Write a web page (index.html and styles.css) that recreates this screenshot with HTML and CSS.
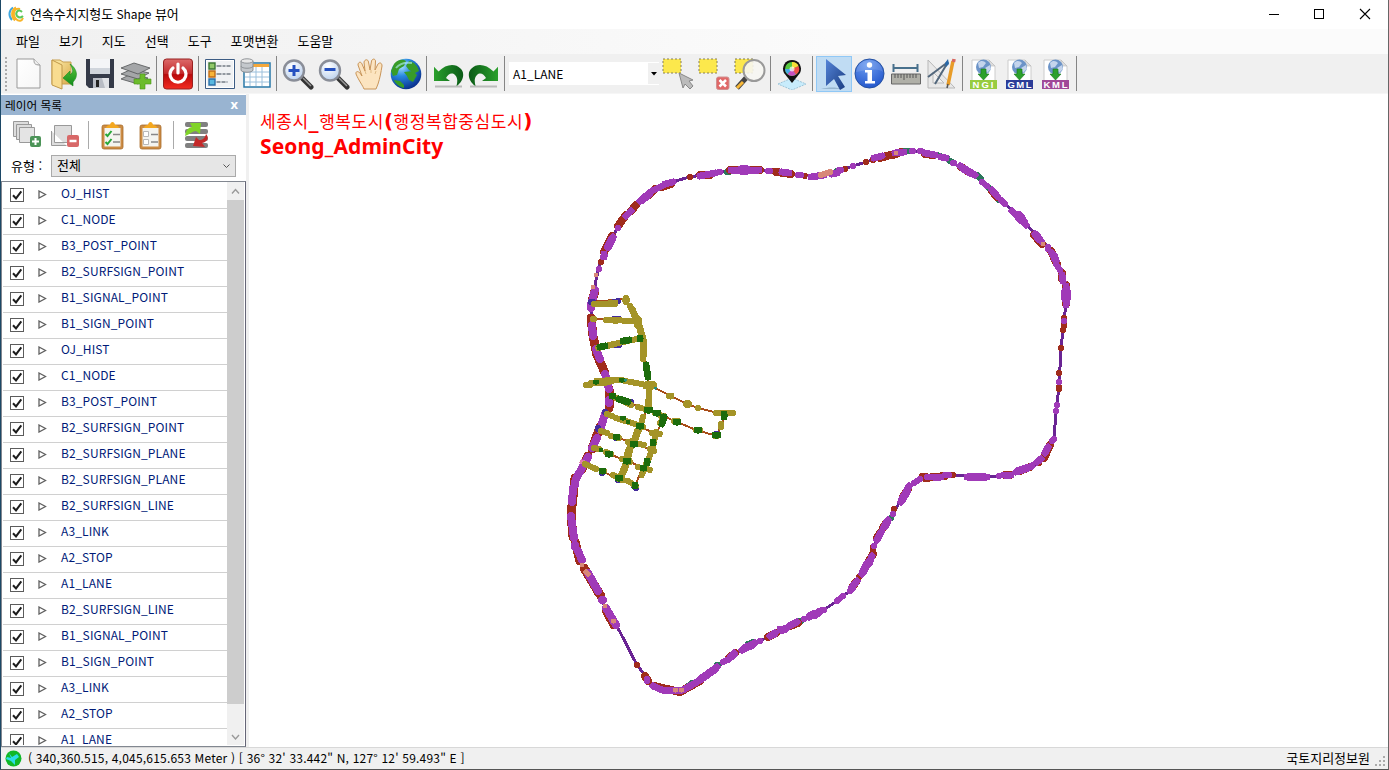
FILE: index.html
```html
<!DOCTYPE html>
<html lang="ko">
<head>
<meta charset="utf-8">
<title>연속수치지형도 Shape 뷰어</title>
<link rel="stylesheet" href="styles.css">
</head>
<body>
<svg class="defs" aria-hidden="true">
  <defs>
    <linearGradient id="gRed" x1="0" y1="0" x2="0" y2="1"><stop offset="0" stop-color="#dc6a6a"/><stop offset=".48" stop-color="#c42a2c"/><stop offset=".52" stop-color="#b80a0c"/><stop offset="1" stop-color="#f42c22"/></linearGradient>
    <linearGradient id="gFolder" x1="0" y1="0" x2="1" y2="1"><stop offset="0" stop-color="#fff0b0"/><stop offset="1" stop-color="#d8a848"/></linearGradient>
    <linearGradient id="gGreen" x1="0" y1="0" x2="0" y2="1"><stop offset="0" stop-color="#5cc83c"/><stop offset="1" stop-color="#118a1a"/></linearGradient>
    <linearGradient id="gPaper" x1="0" y1="0" x2="1" y2="1"><stop offset="0" stop-color="#fff"/><stop offset="1" stop-color="#f6f6f6"/></linearGradient>
    <radialGradient id="gLens" cx=".4" cy=".3" r=".8"><stop offset="0" stop-color="#fff"/><stop offset="1" stop-color="#b4ccec"/></radialGradient>
    <radialGradient id="gGlobe" cx=".35" cy=".25" r=".8"><stop offset="0" stop-color="#a8e4ff"/><stop offset=".4" stop-color="#2888e0"/><stop offset="1" stop-color="#082c88"/></radialGradient>
    <radialGradient id="gInfo" cx=".4" cy=".2" r=".9"><stop offset="0" stop-color="#6c9cf0"/><stop offset="1" stop-color="#1c50c8"/></radialGradient>
    <linearGradient id="gArrow" x1="0" y1="0" x2="1" y2="1"><stop offset="0" stop-color="#5484d8"/><stop offset="1" stop-color="#1a3c80"/></linearGradient>
    <linearGradient id="gUndo" x1="0" y1="0" x2="1" y2="0"><stop offset="0" stop-color="#2aa02c"/><stop offset="1" stop-color="#0a5a16"/></linearGradient>
    <g id="lens">
      <path d="M20 20l9 9" stroke="#333" stroke-width="5" stroke-linecap="round"/><path d="M21 20l8 8" stroke="#999" stroke-width="1.5"/>
      <circle cx="12" cy="12.500" r="10" fill="url(#gLens)" stroke="#8a8e98" stroke-width="2.400"/>
    </g>
    <g id="undo">
      <path d="M3 28.500h27" stroke="#bbb" stroke-width="2"/>
      <path d="M2 8.700V23H18L14 20C16 16 20 14 23 17C26 20 25.500 24 24.500 28C32 23 33 14 28.500 10.500C23 5 14 6 6.500 13.500z" fill="url(#gUndo)"/>
    </g>
    <g id="export">
      <path d="M3 2h17l6 6v16H3z" fill="#fff" stroke="#ccc"/><path d="M20 2v6h6z" fill="#ddd" stroke="#bbb" stroke-width=".6"/>
      <circle cx="14.500" cy="9" r="7.500" fill="#6c94c8"/><path d="M9 5c3-3 6-2 8 0l-3 4-4 1zM16 10l5-3 1 4-4 4z" fill="#c4d4ec"/>
      <path d="M12 11h5v5h3l-5.500 6L9 16h3z" fill="#2ca02c" stroke="#187818" stroke-width=".6"/>
    </g>
    <g id="check"><rect x=".5" y=".5" width="13" height="13" fill="#fff" stroke="#5c5c5c"/><path d="M3 7.200l3 3.200 5.300-7" fill="none" stroke="#1c1c1c" stroke-width="2"/></g>
    <path id="tri" d="M1 1l6.500 3.500L1 8z" fill="#fff" stroke="#606060" stroke-width="1.300"/>
    <g id="clip">
      <rect x="4" y="4" width="21" height="24" rx="2" fill="#cc8c44" stroke="#a86c2c" stroke-width=".8"/><path d="M6.500 7h16v18.500h-16z" fill="#f4f4f0"/>
      <path d="M8 7c0-2 2-3 4-3 .5-4 4.500-4 5 0 2 0 4 1 4 3z" fill="#f4a820"/><path d="M15 13.500h7M15 21h7" stroke="#888" stroke-width="1.500"/>
    </g>
  </defs>
</svg>

<div class="window">
  <header class="titlebar">
    <svg class="logo" width="17" height="17" viewBox="0 0 17 17" fill="none"><path d="M5 1.500C1 4 0 10 4 14" stroke="#40a8e0" stroke-width="2"/><path d="M8 1.500C3 4 3 11 7 14.500M12 3C6 1 4 9 8 13c3 3 6 2 7-1" stroke="#f8b428" stroke-width="2"/><path d="M14 6c-4-4-7 1-5 4 2 2 4 2 6 0" stroke="#5cc858" stroke-width="2"/></svg>
    <h1 class="title">연속수치지형도 <span>Shape</span> 뷰어</h1>
    <div class="controls">
      <svg width="46" height="29" viewBox="0 0 46 29"><path d="M19 14.500h10" stroke="#000"/></svg>
      <svg width="46" height="29" viewBox="0 0 46 29"><rect x="18.500" y="9.500" width="9" height="9" fill="none" stroke="#000"/></svg>
      <svg width="46" height="29" viewBox="0 0 46 29"><path d="M18 9l10 10M28 9L18 19" stroke="#000" stroke-width="1.100"/></svg>
    </div>
  </header>

  <nav class="menubar"><span>파일</span><span>보기</span><span>지도</span><span>선택</span><span>도구</span><span>포맷변환</span><span>도움말</span></nav>

  <div class="toolbar">
    <i class="grip"></i>
    <div class="tool"><svg viewBox="0 0 32 32"><path d="M5 1h17l6 6v23H5z" fill="url(#gPaper)" stroke="#999"/><path d="M22 1c0 4 0 6 6 6" fill="#eee" stroke="#999"/></svg></div>
    <div class="tool"><svg viewBox="0 0 32 32"><path d="M4 2h8l3 2h8v22H4z" fill="url(#gFolder)" stroke="#c8a050"/><path d="M4 2l10 5v24L4 27z" fill="#f8dc90" stroke="#c09848"/><path d="M22 6c5 3 10 11 3 18v4l-10-8 7-7v4c4-3 3-6 0-11z" fill="url(#gGreen)" stroke="#18881c" stroke-width=".6"/></svg></div>
    <div class="tool"><svg viewBox="0 0 32 32"><path d="M2 1h28v29H5l-3-3z" fill="#343a48"/><path d="M6 1h20v15H6z" fill="#f4f5f7"/><path d="M6 10h20v6H6z" fill="#d0d5dc"/><path d="M9 20h16v10H9z" fill="#b8bcc4"/><path d="M12 22h3v7h-3z" fill="#222"/><path d="M18 20l3 10h4V20z" fill="#e0e2e6"/></svg></div>
    <div class="tool"><svg viewBox="0 0 32 32"><g fill="#a4a6a8" stroke="#525456" stroke-width=".8"><path d="M1 21l10-5 17 4-10 6z"/><path d="M1 16l11-5 17 4-11 6z"/><path d="M1 10l13-5 16 5-12 6z"/></g><path d="M20 16h5v5h6v5h-6v5h-5v-5h-6v-5h6z" fill="#6cbc2c" stroke="#4c9418" stroke-width=".6"/></svg></div>
    <i class="sep"></i>
    <div class="tool"><svg viewBox="0 0 32 32"><rect x="1.500" y="1" width="29" height="30" rx="3" fill="url(#gRed)" stroke="#982020"/><path d="M11 10a8 8 0 1 0 10 0M16 6v9" fill="none" stroke="#fff" stroke-width="3.200" stroke-linecap="round"/></svg></div>
    <i class="sep"></i>
    <div class="tool"><svg viewBox="0 0 32 32"><path d="M1.500 1.500h29v29h-29z" fill="#fff" stroke="#3c5c84"/><path d="M3 3h26v26H3z" fill="#f0f2f4"/><g stroke-width="1.400"><path d="M5 5h6v6H5z" fill="#90c868" stroke="#3c7834"/><path d="M5 13h6v6H5z" fill="#f8b438" stroke="#c06c18"/><path d="M5 21h6v6H5z" fill="#58b8e0" stroke="#2c70a8"/></g><path d="M12.500 8h5m1 0h3m1 0h4M12.500 16h5m1 0h3m1 0h4M12.500 24h4m1 0h4m1 0h1" stroke="#34404c" stroke-width="1.200"/></svg></div>
    <div class="tool"><svg viewBox="0 0 32 32"><path d="M4 5h26v24H4z" fill="#fff" stroke="#2878a8" stroke-width="1.500"/><path d="M5 6h24v3H5z" fill="#f4a83c"/><path d="M5 14h24M5 19h24M5 24h24M10 9v19M16 9v19M22 9v19" stroke="#9cc0dc"/><path d="M1 3v9c0 3 12 3 12 0V3" fill="#c4c8cc" stroke="#8c9094"/><ellipse cx="7" cy="3" rx="6" ry="2.200" fill="#e8e8e8" stroke="#909498"/><path d="M1 8c0 3 12 3 12 0" fill="none" stroke="#909498"/></svg></div>
    <i class="sep"></i>
    <div class="tool"><svg viewBox="0 0 32 32"><use href="#lens"/><path d="M12 7v11M6.500 12.500h11" stroke="#2450c0" stroke-width="3"/></svg></div>
    <div class="tool"><svg viewBox="0 0 32 32"><use href="#lens"/><path d="M6.500 11.500h11" stroke="#2450c0" stroke-width="3"/></svg></div>
    <div class="tool"><svg viewBox="0 0 32 32"><path d="M10 31c-1-3-5-8-8-15-.5-3 2-3 4-1l2 3-4-11c0-3 3-4 4-1l3 7-1-9c1-3 4-3 4.500 0l1.500 8 1.500-9c1-3 4-2 4 0l-.5 9 3-6c2-2 4-1 4 2-1 6-2 12-4 18l-2 5z" fill="#fce4c0" stroke="#c89458"/><path d="M11 13l1 3M17 12v3M22 13l-1 3" stroke="#e0bc88"/></svg></div>
    <div class="tool"><svg viewBox="0 0 32 32"><circle cx="16" cy="16" r="15.300" fill="url(#gGlobe)"/><path d="M4 6c4-5 9-5 12-3l-2 5-5 3-2 6-4 1-2-5zM19 3c6 1 9 6 10 10l-4 2-6-3-3-4zM14 14l9-1 4 4-4 7-4-2-2-4zM4 22l6 1 4 4 0 3C9 29 5 25 4 22z" fill="#389c28"/><path d="M6 10c4-5 9-6 16-5" stroke="#b8f4ff" stroke-width="2" opacity=".6" fill="none"/></svg></div>
    <i class="sep"></i>
    <div class="tool"><svg viewBox="0 0 32 32"><use href="#undo"/></svg></div>
    <div class="tool"><svg viewBox="0 0 32 32"><use href="#undo" transform="matrix(-1 0 0 1 32 0)"/></svg></div>
    <i class="sep"></i>
    <div class="combo"><span>A1_LANE</span><b><svg width="6" height="4" viewBox="0 0 6 4"><path d="M0 0h6L3 3.500z"/></svg></b></div>
    <div class="tool"><svg viewBox="0 0 32 32"><path d="M1 1h18v14H1z" fill="#fce84c" stroke="#888058" stroke-dasharray="2 2"/><path d="M17 15l14 7-4 1 4 5-3 3-5-5-2 4z" fill="#bbb" stroke="#888"/></svg></div>
    <div class="tool"><svg viewBox="0 0 32 32"><path d="M1 1h18v14H1z" fill="#fce84c" stroke="#888058" stroke-dasharray="2 2"/><rect x="18.500" y="19" width="12.500" height="12.500" rx="2" fill="#e06868" stroke="#d09090"/><path d="M21.500 22l6.500 6.500m0-6.500l-6.500 6.500" stroke="#fff" stroke-width="2.500"/></svg></div>
    <div class="tool"><svg viewBox="0 0 32 32"><path d="M1 1h18v14H1z" fill="#fce84c" stroke="#807848" stroke-dasharray="2 2"/><path d="M12 20l-9 10" stroke="#444" stroke-width="5"/><path d="M9 24l-6 6" stroke="#f8b838" stroke-width="3"/><circle cx="20" cy="12.500" r="10.500" fill="#f6f6f2" fill-opacity=".9" stroke="#999" stroke-width="2"/></svg></div>
    <i class="sep"></i>
    <div class="tool"><svg viewBox="0 0 32 32"><path d="M2 26l14-6 14 6-14 6z" fill="#c8ecfc" stroke="#9cc4d8" stroke-dasharray="2 1"/><path d="M16 25L8 15A9 9 0 1 1 24 15z" fill="#111"/><circle cx="16" cy="11" r="7" fill="#58c840"/><path d="M16 11V4a7 7 0 0 1 6.500 4z" fill="#f8e038"/><path d="M16 11l6.500-3a7 7 0 0 1-2.500 8.500z" fill="#f05048"/><path d="M16 11l4 5.500a7 7 0 0 1-8.500-.5z" fill="#c850c0"/><path d="M16 11l-4.500 5a7 7 0 0 1-2.500-5z" fill="#48a8e8"/><circle cx="16" cy="11" r="2.500" fill="#fff" opacity=".7"/></svg></div>
    <i class="sep"></i>
    <div class="tool active"><svg viewBox="0 0 32 32"><path d="M3 31c7-2 15-2 22 0z" fill="#7c9cb8" opacity=".6"/><path d="M8 1l20 16-8 1 7 11-5 3-6-11-8 7z" fill="url(#gArrow)"/></svg></div>
    <div class="tool"><svg viewBox="0 0 32 32"><circle cx="15.500" cy="15.500" r="14.500" fill="url(#gInfo)" stroke="#2450a0"/><path d="M2 14C4-2 27-2 29 14c-7-5-18-1-27 0z" fill="#fff" opacity=".13"/><circle cx="15.500" cy="7" r="2.700" fill="#fff"/><path d="M11 12h7v11h3v2.500H11V23h2.500v-8.500H11z" fill="#fff"/></svg></div>
    <div class="tool"><svg viewBox="0 0 32 32"><path d="M3.500 6v8M27.500 6v8M3 10h25" stroke="#48708c" stroke-width="2"/><path d="M1.500 16h29v10h-29z" fill="#b0b0a8" stroke="#666"/><path d="M5 16v4m3-4v4m3-4v4m3-4v6m3-6v4m3-4v4m3-4v4m3-4v4" stroke="#555"/></svg></div>
    <div class="tool"><svg viewBox="0 0 32 32"><path d="M2 2v28h27zM7 14v11h11z" fill="#e8e8e8" fill-rule="evenodd" stroke="#b8b8b8"/><path d="M22 4L2 19M22 4l-13 22" stroke="#52677c" stroke-width="2"/><path d="M19 5l3-4 1 5-3 3z" fill="#2868a8"/><path d="M27 3l-5 24" stroke="#e89c28" stroke-width="3.500"/><path d="M28 1l-.5 3" stroke="#d86860" stroke-width="3.500"/><path d="M22 26l-1 4" stroke="#555" stroke-width="1.500"/></svg></div>
    <i class="sep"></i>
    <div class="tool"><svg viewBox="0 0 32 32"><use href="#export" x="1"/><path d="M2 22h27v9H2z" fill="#98cc40"/><text class="fmt" x="4.500" y="30" textLength="21">NGI</text></svg></div>
    <div class="tool"><svg viewBox="0 0 32 32"><use href="#export" x="1"/><path d="M2 22h27v9H2z" fill="#2c3c98"/><text class="fmt" x="3.500" y="30" textLength="24">GML</text></svg></div>
    <div class="tool"><svg viewBox="0 0 32 32"><use href="#export" x="1"/><path d="M2 22h27v9H2z" fill="#a04898"/><text class="fmt" x="3.500" y="30" textLength="24">KML</text></svg></div>
    <i class="sep"></i>
  </div>

  <main class="body">
    <aside class="panel">
      <div class="panel-head"><span>레이어 목록</span><b>x</b></div>
      <div class="panel-tools">
        <svg width="28" height="28" viewBox="0 0 28 28"><g fill="#ddd" stroke="#999"><path d="M.5.500h15v15H.5z"/><path d="M3.500 3.500h15v15h-15z"/><path d="M6.500 6.500h15v15h-15z" fill="#e4e4e4"/></g><rect x="17" y="15" width="11" height="11" rx="2" fill="#4c9458"/><path d="M22.500 17v7M19 20.500h7" stroke="#fff" stroke-width="2"/></svg>
        <svg width="28" height="28" viewBox="0 0 28 28"><path d="M.5 10v14.500h15M3.500 4.500h17v17h-17z" fill="#ddd" stroke="#999"/><rect x="16" y="14" width="12" height="12" rx="2" fill="#d86868"/><path d="M18.500 20h7" stroke="#fff" stroke-width="2.500"/></svg>
        <i></i>
        <svg width="28" height="29" viewBox="0 0 28 29"><use href="#clip"/><path d="M7.500 13l2 2 4-5M7.500 21l2 2 4-5" fill="none" stroke="#28a838" stroke-width="2"/></svg>
        <svg width="28" height="29" viewBox="0 0 28 29"><use href="#clip"/><path d="M7.500 10.500h5v5h-5zM7.500 18.500h5v5h-5z" fill="#fff" stroke="#b8b8b8"/></svg>
        <i></i>
        <svg width="28" height="28" viewBox="0 0 28 28"><g fill="#808080"><rect x="2" y="1" width="23" height="5" rx="2"/><rect x="2" y="8" width="23" height="5" rx="2"/><rect x="2" y="15" width="23" height="5" rx="2"/><rect x="2" y="22" width="23" height="5" rx="2"/></g><path d="M2 15C3 9 6 6 9 6L7 2h11l-1 11-4-3c-3 0-6 3-11 5z" fill="#80d428"/><path d="M23 13c3 3 2 8-4 9l3 4-12-1 3-9 3 3c4 0 6-2 7-6z" fill="#c42828"/></svg>
      </div>
      <div class="filter"><label>유형 :</label><div class="select"><span>전체</span><svg width="7" height="5" viewBox="0 0 7 5"><path d="M.5.500l3 3 3-3" fill="none" stroke="#555"/></svg></div></div>
      <div class="tree">
        <ul class="rows">
          <li><svg class="c"><use href="#check"/></svg><svg class="t"><use href="#tri"/></svg>OJ_HIST</li>
          <li><svg class="c"><use href="#check"/></svg><svg class="t"><use href="#tri"/></svg>C1_NODE</li>
          <li><svg class="c"><use href="#check"/></svg><svg class="t"><use href="#tri"/></svg>B3_POST_POINT</li>
          <li><svg class="c"><use href="#check"/></svg><svg class="t"><use href="#tri"/></svg>B2_SURFSIGN_POINT</li>
          <li><svg class="c"><use href="#check"/></svg><svg class="t"><use href="#tri"/></svg>B1_SIGNAL_POINT</li>
          <li><svg class="c"><use href="#check"/></svg><svg class="t"><use href="#tri"/></svg>B1_SIGN_POINT</li>
          <li><svg class="c"><use href="#check"/></svg><svg class="t"><use href="#tri"/></svg>OJ_HIST</li>
          <li><svg class="c"><use href="#check"/></svg><svg class="t"><use href="#tri"/></svg>C1_NODE</li>
          <li><svg class="c"><use href="#check"/></svg><svg class="t"><use href="#tri"/></svg>B3_POST_POINT</li>
          <li><svg class="c"><use href="#check"/></svg><svg class="t"><use href="#tri"/></svg>B2_SURFSIGN_POINT</li>
          <li><svg class="c"><use href="#check"/></svg><svg class="t"><use href="#tri"/></svg>B2_SURFSIGN_PLANE</li>
          <li><svg class="c"><use href="#check"/></svg><svg class="t"><use href="#tri"/></svg>B2_SURFSIGN_PLANE</li>
          <li><svg class="c"><use href="#check"/></svg><svg class="t"><use href="#tri"/></svg>B2_SURFSIGN_LINE</li>
          <li><svg class="c"><use href="#check"/></svg><svg class="t"><use href="#tri"/></svg>A3_LINK</li>
          <li><svg class="c"><use href="#check"/></svg><svg class="t"><use href="#tri"/></svg>A2_STOP</li>
          <li><svg class="c"><use href="#check"/></svg><svg class="t"><use href="#tri"/></svg>A1_LANE</li>
          <li><svg class="c"><use href="#check"/></svg><svg class="t"><use href="#tri"/></svg>B2_SURFSIGN_LINE</li>
          <li><svg class="c"><use href="#check"/></svg><svg class="t"><use href="#tri"/></svg>B1_SIGNAL_POINT</li>
          <li><svg class="c"><use href="#check"/></svg><svg class="t"><use href="#tri"/></svg>B1_SIGN_POINT</li>
          <li><svg class="c"><use href="#check"/></svg><svg class="t"><use href="#tri"/></svg>A3_LINK</li>
          <li><svg class="c"><use href="#check"/></svg><svg class="t"><use href="#tri"/></svg>A2_STOP</li>
          <li><svg class="c"><use href="#check"/></svg><svg class="t"><use href="#tri"/></svg>A1_LANE</li>
        </ul>
        <div class="scroll">
          <svg width="17" height="18" viewBox="0 0 17 18"><path d="M5 11.500l3.500-4 3.500 4" fill="none" stroke="#999" stroke-width="1.400"/></svg>
          <div class="thumb"></div>
          <svg width="17" height="17" viewBox="0 0 17 17"><path d="M5 7l3.500 4L12 7" fill="none" stroke="#999" stroke-width="1.400"/></svg>
        </div>
      </div>
    </aside>

    <section class="map">
      <svg width="1139" height="653" viewBox="249 94 1139 653" fill="none" stroke-linecap="round" stroke-linejoin="round" shape-rendering="crispEdges">
        <!-- boundary road -->
        <path stroke="#6a2494" stroke-width="3" d="M593 297L596 280L598.500 269L602 257L609 243L618 227L628 213L643 199L655 190L668 183L690 177L707 174L719 172L743 170L760 170L785 173L800 175L812 176L827 175L839 171L853 166L866 162L882 157L900 152L912 151L920 151L930 154L944 158L953 163L968 171L985 183L995 193L1005 204L1020 218L1037 236L1048 247L1053 256L1058 265L1063 277L1066 295L1065 312L1061 348L1059 387L1056 411L1054 439L1048 450L1038 463L1023 469L1008 474L999 476L977 477L952 475L937 476L920 479L908 487L902 498L893 514L886 524L880 536L874 546L871 558L867 568L859 577L855 584L850 591L843 596L837 601L825 609L815 614L804 619L782 630L760 641L750 645L732 655L715 669L703 678L692 687L682 690L672 691L654 687L647 678L637 665L620 632L613 621L605 607L590 578L582 565L575 545L571 515L572 497L575 483L583 463L590 452L600 427L605 413L609 400L608 383L603 368L596 352L592 330L591 313Z"/>
        <!-- green edges -->
        <path stroke="#2c785c" stroke-width="6" d="M727 172h2M837 171h1M905 151h4M937 155l10 3M950 161l2 1M977 175l4 4M989 188l4 3M998 198l1 2M1061 271l2 4M985 477h2M969 478h3M891 518h0M880 533l-1 1M869 559l-2 4M800 621h1M717 665h1M748 644l5-2M688 686l4-3"/>
        <!-- red markers -->
        <g stroke="#a02c1c">
          <path stroke-width="6" d="M690 177h0M601 262h0M773 171l10 1M801 175l4 1M845 169h0M866 162h0M873 160h0M1064 318v8M1063 330v0M1061 348v0M1059 373v0M1059 387v2M894 509h0M873 547v5M859 577h0M637 665v0M1038 463h1M947 475h6M922 476h4"/>
          <path stroke-width="8" d="M604 252l8-16M618 226l8-11M631 211l5-6M649 195l6-6M662 187l9-3M700 175h10M730 170h30M776 172l15 2M880 158l10-3M893 155l8-3M925 154l8 1M961 167l8 5M992 191l5 6M1018 215l4 4M1034 235l8 9M1051 251l6 13M1062 273v6M1066 285v19M1050 445l-6 13M1020 471l10-4M1005 475h5M925 478l20-2M908 489l-5 8M886 523l-3 5M880 533l-3 5M873 554l-9 16M856 582l-3 4M768 637l8-4M790 626l8-3M735 653l-6 5M700 681l-20 11l-26-6M645 676l3 5"/>
          <path stroke-width="9" d="M595 291l-3 10M591 318l2 18l4 19l8 18M609 389v19M600 427l-8 22M588 456l-6 13M575 478l-4 37M571 515l2 22M575 542l5 19M584 568l15 25M598 592l3 4M606 610l8 15"/>
        </g>
        <!-- lane markings -->
        <g stroke="#a03ab8">
          <path stroke-width="6" d="M654 190l10-5M599 269h0M603 257h0M618 228h0M719 172h0M720 172h0M768 171h2M798 175l3 0M839 170l2 0M853 166h0M912 151h1M920 151h1M953 163h1M982 182l5 4M1001 200l4 4M1048 247v2M1056 264l4 6M1064 321v0M1059 382v0M1057 405v0M1056 411v0M1054 439l-2 2M999 476h0M927 477h2M945 475h4M914 483l6-4M893 514h0M874 546h0M850 591l3-3M837 601l6-5M822 610h2M804 619h0M760 641h0M723 662l4-2M647 679v2"/>
          <path stroke-width="7" d="M604 254v3M608 247l5-10M626 216l5-5M640 201l12-10M665 184l8-2M700 176l15-3M731 170h28M782 172l7 1M811 177l13-2M832 174l5-1M874 158l8-2M895 153l9-1M925 153l10 2M941 157l5 1M960 166l15 9M992 190l5 6M1012 211l14 14M1035 234l6 7M1052 253l4 8M1062 275l1 6M1066 286v19M1048 447l-3 6M1041 459l-4 3M1016 472l16-6M1004 475h7M967 477h20M933 477h8M909 486l-8 16M888 520l-4 7M881 532l-4 8M872 556l-3 8M868 562l-6 12M857 581l-5 6M819 612l-10 5M797 622l-8 4M784 629h-4M775 633l-5 3M755 643l-13 7M734 653l-5 6M717 667l-20 15l-14 8h-21l-9-4"/>
          <path stroke-width="8" d="M595 290l-3 12M591 304v4M592 325l1 11M596 349l4 10M605 374l4 15M609 400v3M605 414l-5 16M597 438l-5 10M588 457l-8 15M579 473l-3 6M575 482v3M573 488l-1 14M571 516l3 22M575 545v2M578 551l4 9M588 573l10 18M602 600h1M606 608l10 17M608 247l4-8M642 200l7-6M964 169l7 4M1018 216l6 6M1036 235l3 4M1054 256l1 3M907 491l-5 9M887 522l-2 4M867 564l-4 8M1018 471l9-3M969 477h15M814 614l-4 2M752 645l-7 3M734 654l-2 2M715 669l-14 10M815 615l4-3M774 634h0M785 629l-3 1"/>
          <path stroke-width="10" d="M742 170h4M1019 216l2 3M1066 292v6"/>
        </g>
        <path stroke="#d88878" stroke-width="6" d="M821 175l9-3"/>
        <path stroke="#d88878" stroke-width="5" d="M596 275v0M593 287v0M896 153h0M1043 244h0M582 565h0M586 572l2 2M605 606v0M613 621h1M675 690h1M681 690h1"/>
        <path stroke="#e07ca8" stroke-width="5" d="M582 462l3 1"/>
        <!-- city grid -->
        <path stroke="#a84c18" stroke-width="2" d="M591 302L626 299L638 323L643 350L649 385L671 396L687 404L698 408L718 413L725 415L717 436L696 430L677 422L658 414L612 396M592 319L638 321M598 348L642 339M584 385L612 380L649 386L649 405L618 478M606 413L657 434M600 431L652 450M594 448L650 470M583 463L635 486L664 416"/>
        <path stroke="#442c9c" stroke-width="6" d="M591 302h2M610 303l8-2M614 319h5M615 345h4M605 412h0M598 428v1M628 402h3M643 357v2M676 421h1M716 434h1M616 438h1M602 472v1M618 478v2M634 486l2 2"/>
        <g stroke="#a49428">
          <path stroke-width="6" d="M594 304h21M626 298v4M630 306l4 8M637 321v4M593 319h1M606 320l32 1M598 348l14-3M605 346l36-8M643 350v9M649 388v8M648 401v6M586 385h4M591 383h14M607 380h15M625 381l17 3M669 396h2M686 404h3M698 408h0M716 413h17M721 424v3M614 397l17 8M638 407l10 3M655 413l8 3M674 421h4M696 430h4M715 436h2M607 414l5 2M616 418l19 6M641 427h2M652 433l8 1M601 431l6 2M611 436l8 2M628 442l16 3M650 449l4 2M594 448l5 1M606 452l5 2M622 459l8 3M638 467l12 3M585 464l11 5M602 471h2M613 475l10 5M628 481l8 5M649 398v8M643 417l-4 14M632 441l-5 13M664 416l-4 7M656 432l-3 15M653 446l-6 18M646 464l-4 11"/>
          <path stroke-width="7" d="M632 309l7 16l4 14v18M597 381h14M646 386h7M630 449l-6 22M620 479l8-20M638 430l-5 15M611 303h4M613 320h5M671 396h-1"/>
          <path stroke-width="8" d="M647 385h6M626 300v0M687 404h1M638 320h0"/>
        </g>
        <g stroke="#1c6c0c">
          <path stroke-width="5" d="M595 382h2M621 380h2M622 418h2M628 422h0M601 450h0"/>
          <path stroke-width="7" d="M600 347l5-1M623 341l6-1M640 338v1M646 365l2 12M612 396h1M619 399l9 3M647 410h3M656 413h2M664 417l-2 7M676 422h2M697 430h2M715 435h3M724 414v3M639 426h2M616 437h1M633 444h2M608 454h2M626 461h2M643 468h1M602 471h1M618 478h2M635 485v1M647 461v2M653 442v1"/>
        </g>
        <path stroke="#259080" stroke-width="3" d="M625 380h1M655 388h1"/>
      </svg>
      <div class="caption"><p class="ko">세종시<strong>_</strong>행복도시<strong>(</strong>행정복합중심도시<strong>)</strong></p><p class="en">Seong_AdminCity</p></div>
    </section>
  </main>

  <footer class="status">
    <svg width="17" height="17" viewBox="0 0 17 17"><circle cx="8.500" cy="8.500" r="8" fill="#10b828"/><path d="M4 3l3 4 5-3 2 3-4 3 0 5-4-4-5-2 1-2 4 1z" fill="#2cdce8"/></svg>
    <span class="coords">( 340,360.515, 4,045,615.653 Meter ) [ 36° 32' 33.442" N, 127° 12' 59.493" E ]</span>
    <span class="org">국토지리정보원</span>
    <svg class="size" width="12" height="12" viewBox="0 0 12 12" fill="#aaa"><path d="M9 1h2v2H9zM9 5h2v2H9zM9 9h2v2H9zM5 5h2v2H5zM5 9h2v2H5zM1 9h2v2H1z"/></svg>
  </footer>
</div>
</body>
</html>
```
FILE: styles.css
```css
* { box-sizing: border-box; }
body { margin: 0; font: 12px/16px "Noto Sans CJK KR", sans-serif; color: #000; overflow: hidden; }
svg { display: block; flex: none; }
p, h1, ul { margin: 0; padding: 0; }
.defs { position: absolute; width: 0; height: 0; }
.window { width: 1389px; height: 770px; display: flex; flex-direction: column; background: #f0f0f0; border-left: 1px solid #1c4866; border-right: 1px solid #666; border-bottom: 1px solid #555; }

.titlebar { height: 29px; display: flex; align-items: center; background: #fff; }
.logo { margin-left: 7px; }
.title { margin: -2px 0 0 5px; font-size: 13px; font-weight: 400; letter-spacing: -.1px; }
.title span { font-size: 12px; }
.controls { display: flex; margin-left: auto; }

.menubar { height: 25px; display: flex; gap: 19px; padding: 4px 0 0 15px; font-size: 13px; background: linear-gradient(90deg, #f0f0f0, #fbfbfb 60%); }

.toolbar { height: 40px; display: flex; align-items: center; background: #f0f0f0; border-bottom: 1px solid #f6f6f6; }
.grip { width: 2px; height: 34px; margin: 0 3px 0 4px; background: repeating-linear-gradient(#aaa 0 2px, transparent 2px 4px); }
.tool { width: 36px; height: 36px; flex: none; display: flex; align-items: center; justify-content: center; border: 1px solid transparent; }
.tool svg { width: 32px; height: 32px; }
.tool.active { background: #c0dcf3; border-color: #90c8f6; }
.sep { width: 1px; height: 35px; margin: 0 3px 0 2px; background: #858585; flex: none; }
.fmt { font: bold 9.500px "Liberation Sans", sans-serif; fill: #fff; }
.combo { width: 150px; height: 23px; margin: 0 1px; display: flex; align-items: center; background: #fff; padding-left: 4px; }
.combo span { flex: 1; }
.combo b { width: 11px; height: 21px; background: #f0f0f0; display: flex; align-items: center; justify-content: center; }

.body { flex: 1; min-height: 0; display: flex; }
.panel { width: 248px; display: flex; flex-direction: column; background: #fff; border-right: 3px solid #f0f0f0; padding-top: 1px; }
.panel-head { height: 20px; flex: none; display: flex; justify-content: space-between; align-items: center; padding: 0 8px 0 4px; background: #99b4d1; font-size: 11.7px; }
.panel-head b { color: #fff; font: bold 13px/14px "Open Sans", sans-serif; margin-top: -2px; }
.panel-head span { margin-top: -1px; }
.panel-tools { height: 40px; flex: none; display: flex; align-items: center; padding: 0 0 0 12px; }
.panel-tools svg + svg { margin-left: 10px; }
.panel-tools i { width: 1px; height: 28px; background: #aaa; margin: 0 9px 0 9px; }
.filter { height: 26px; flex: none; display: flex; align-items: flex-start; font-size: 13px; }
.filter label { width: 50px; padding: 3px 0 0 10px; }
.select { width: 185px; height: 22px; display: flex; align-items: center; justify-content: space-between; padding: 0 5px; background: #e6e6e6; border: 1px solid #aaa; }
.select span { margin-top: -2px; }
.tree { flex: 1; min-height: 0; display: flex; border: 1px solid #828790; border-right-color: #667; padding: 0 1px 1px; }
.rows { flex: 1; list-style: none; overflow: hidden; padding-top: 1px; }
.rows li { height: 26px; display: flex; align-items: center; border-bottom: 1px solid #d0d0d0; color: #001a78; font-size: 12px; letter-spacing: .12px; padding: 0 0 5px 7px; }
.c { width: 14px; height: 14px; margin-top: 3px; }
.t { width: 9px; height: 9px; margin: 2px 14px 0 14px; }
.scroll { width: 17px; display: flex; flex-direction: column; background: #f0f0f0; }
.thumb { height: 504px; background: #cdcdcd; margin-bottom: auto; }

.map { flex: 1; min-width: 0; display: grid; background: #fff; overflow: hidden; }
.map > * { grid-area: 1 / 1; }
.caption { padding: 15px 0 0 11px; color: #f00; }
.caption p { height: 24px; line-height: 24px; white-space: nowrap; }
.ko { font-size: 17px; letter-spacing: .55px; }
.ko strong { font-family: "DejaVu Sans", sans-serif; font-weight: 700; font-size: 20px; line-height: 20px; }
.caption .en { font: 700 21px/26px "Noto Sans", sans-serif; letter-spacing: .1px; }

.status { height: 22px; flex: none; display: flex; align-items: center; padding: 0 0 1px 4px; border-top: 1px solid #d8d8d8; background: #f0f0f0; }
.coords { margin-left: 6px; letter-spacing: .2px; white-space: nowrap; }
.org { margin-left: auto; font-size: 13px; }
.size { margin: 6px 2px 0 4px; }
```
